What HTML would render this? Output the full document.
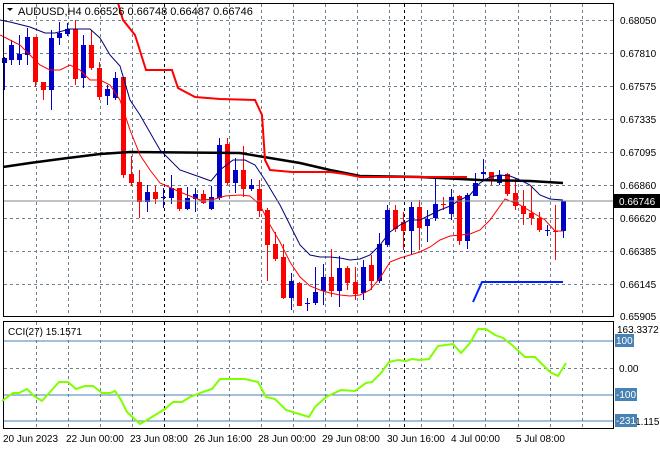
<!DOCTYPE html>
<html><head><meta charset="utf-8"><style>
html,body{margin:0;padding:0;background:#fff;}
svg{display:block;font-family:"Liberation Sans",sans-serif;}
</style></head><body>
<svg id="s" width="660" height="450" viewBox="0 0 660 450" xmlns="http://www.w3.org/2000/svg">
<rect width="660" height="450" fill="#fff"/>
<g id="grid" stroke="#6f7f8f" stroke-width="1" stroke-dasharray="3,3" fill="none"></g>
<g id="cand"></g>
<polyline fill="none" stroke="#000" stroke-width="2.5" points="3,167 30,163 60,159 100,154 130,152 240,153 270,158 300,163 330,170 360,176 420,177 480,180 530,181 563,183"/>
<polyline fill="none" stroke="#ff0000" stroke-width="2" points="118,3 123,20 135,35 146,70 172,70 178,88 195,97 220,99 255,100 262,115 265,160 270,170 292,172 330,172 345,174 360,177 467,177"/>
<polyline fill="none" stroke="#00007a" stroke-width="1" points="0,20 10,22 30,27 45,33 55,33 70,29 90,29 100,38 110,55 120,66 130,100 140,115 160,150 180,170 200,177 211,181 220,170 233,160 245,160 255,165 265,180 280,205 290,225 300,245 310,255 320,257 330,257 340,258 350,260 360,259 370,255 380,245 390,232 400,225 410,220 420,220 430,215 440,210 450,206 460,200 470,195 480,183 490,177 500,175 510,176 520,180 530,185 540,195 550,199 563,200"/>
<polyline fill="none" stroke="#ff0000" stroke-width="1" points="0,35 10,40 20,45 30,55 40,65 50,70 60,70 70,65 80,70 90,80 100,80 110,85 120,100 130,130 140,155 150,170 160,183 180,192 200,200 215,199 225,196 240,195 250,196 260,205 270,225 280,242 290,262 300,277 310,286 320,290 330,293 340,295 350,296 360,295 370,290 380,278 390,262 400,258 410,255 420,252 430,247 440,240 450,236 460,235 470,234 480,230 490,220 505,199 520,205 535,214 545,220 555,231 563,231"/>
<polyline fill="none" stroke="#0020ff" stroke-width="2" points="473,302 482,282 563,282"/>
<line x1="3" y1="201" x2="613" y2="201" stroke="#808890" stroke-width="1"/>
<!-- frames -->
<rect x="3.5" y="3.5" width="610" height="313" fill="none" stroke="#000"/>
<rect x="3.5" y="321.5" width="610" height="107" fill="none" stroke="#000"/>
<!-- CCI levels -->
<line x1="4" y1="341" x2="613" y2="341" stroke="#4682b4"/>
<line x1="4" y1="395" x2="613" y2="395" stroke="#4682b4"/>
<line x1="4" y1="421" x2="613" y2="421" stroke="#4682b4"/>
<polyline fill="none" stroke="#7fff00" stroke-width="2" points="2,401 13,393 19,393 27,389 34,396 42,401 59,382 68,382 76,389 85,386 93,386 102,393 110,393 115,391 121,400 127,412 140,424 152,417 165,409 173,402 182,402 190,397 203,392 212,389 220,379 245,379 258,382 266,397 275,399 286,410 296,413 309,417 315,407 326,397 341,390 355,391 366,383 372,382 381,373 389,362 398,360 406,361 412,359 419,360 429,359 438,346 453,344 461,353 470,343 478,329 486,329 495,335 503,338 512,345 525,357 535,357 546,368 550,372 558,376 566,363"/>
<!-- header -->
<polygon points="7,8 13,8 10,11" fill="#000"/>
<text x="18" y="15" font-size="11" fill="#000">AUDUSD,H4  0.66526 0.66748 0.66487 0.66746</text>
<text x="8" y="335" font-size="10" fill="#000">CCI(27) 15.1571</text>
<!-- right axis -->
<g font-size="10" fill="#000">
<text x="620" y="24">0.68050</text>
<text x="620" y="57">0.67810</text>
<text x="620" y="90">0.67575</text>
<text x="620" y="123">0.67335</text>
<text x="620" y="156">0.67095</text>
<text x="620" y="189">0.66860</text>
<text x="620" y="222">0.66620</text>
<text x="620" y="255">0.66385</text>
<text x="620" y="288">0.66145</text>
<text x="620" y="320">0.65905</text>
<text x="617" y="333">163.3372</text>
<text x="619" y="372">0.00</text>
<text x="624" y="425">231.115</text>
</g>
<rect x="614" y="194" width="46" height="14" fill="#000"/>
<text x="619" y="205" font-size="10" fill="#fff">0.66746</text>
<rect x="615" y="334" width="19" height="13" fill="#4682b4"/>
<text x="616" y="344" font-size="10" fill="#fff">100</text>
<rect x="615" y="388" width="22" height="13" fill="#4682b4"/>
<text x="616" y="398" font-size="10" fill="#fff">-100</text>
<rect x="615" y="414" width="22" height="13" fill="#4682b4"/>
<text x="616" y="424" font-size="10" fill="#fff">-231</text>
<!-- time axis -->
<g font-size="10" fill="#000">
<text x="3" y="442">20 Jun 2023</text>
<text x="66" y="442">22 Jun 00:00</text>
<text x="130" y="442">23 Jun 08:00</text>
<text x="194" y="442">26 Jun 16:00</text>
<text x="258" y="442">28 Jun 00:00</text>
<text x="322" y="442">29 Jun 08:00</text>
<text x="387" y="442">30 Jun 16:00</text>
<text x="451" y="442">4 Jul 00:00</text>
<text x="516" y="442">5 Jul 08:00</text>
</g>
</svg>
<script>
var NS="http://www.w3.org/2000/svg";
function el(p,t,a){var e=document.createElementNS(NS,t);for(var k in a)e.setAttribute(k,a[k]);p.appendChild(e);return e;}
var g=document.getElementById('grid');
for(var i=0;i<18;i++){var x=Math.round(36+32.1*i)+.5;
 el(g,'line',{x1:x,y1:4,x2:x,y2:316});el(g,'line',{x1:x,y1:322,x2:x,y2:428});}
[20,53,86,119,152,185,218,251,284].forEach(function(y){el(g,'line',{x1:4,y1:y+.5,x2:613,y2:y+.5});});
el(g,'line',{x1:4,y1:368.5,x2:613,y2:368.5});
[164.5,404.5].forEach(function(x){el(g,'line',{x1:x,y1:4,x2:x,y2:316,stroke:'#000'});el(g,'line',{x1:x,y1:322,x2:x,y2:428,stroke:'#000'});});
// x, top, bottom, wickTop, wickBottom, color(b/r)
var C=[[4,58,63,57,90,'b'],[11,45,60,40,65,'b'],[19,54,60,35,65,'b'],[27,37,55,28,65,'b'],[35,37,82,37,87,'r'],[43,82,90,82,100,'r'],[51,38,90,30,110,'b'],[59,33,38,22,45,'b'],[67,29,34,23,36,'b'],[75,29,79,20,85,'r'],[83,45,78,35,88,'b'],[91,45,68,30,70,'r'],[99,68,97,62,100,'r'],[107,89,96,85,105,'b'],[115,78,98,72,100,'b'],[123,77,175,77,178,'r'],[131,174,183,156,186,'r'],[139,182,202,170,218,'r'],[147,192,202,185,212,'b'],[155,192,199,186,204,'r'],[163,197,198,188,208,'b'],[171,188,198,175,204,'b'],[179,188,209,188,211,'r'],[187,198,209,187,210,'b'],[195,194,199,188,212,'b'],[203,194,203,190,204,'r'],[211,197,209,186,210,'b'],[219,145,198,138,200,'b'],[227,144,183,138,185,'r'],[235,170,183,158,193,'b'],[243,170,189,146,197,'r'],[251,185,189,179,191,'b'],[259,189,211,180,217,'r'],[267,210,245,208,281,'r'],[275,244,259,232,261,'r'],[283,257,298,244,299,'r'],[291,281,298,273,310,'b'],[299,283,306,282,306,'r'],[307,303,304,298,311,'b'],[315,292,303,267,305,'b'],[323,277,291,264,305,'b'],[331,277,291,249,297,'r'],[339,268,291,256,307,'b'],[347,268,283,266,290,'r'],[355,282,294,267,300,'r'],[363,267,293,260,300,'b'],[371,265,281,255,290,'r'],[379,244,281,233,283,'b'],[387,210,245,205,247,'b'],[395,210,229,205,232,'r'],[403,222,231,212,250,'r'],[411,207,231,202,255,'b'],[419,207,228,200,250,'r'],[427,219,226,210,242,'b'],[435,204,218,178,221,'b'],[443,204,205,197,210,'r'],[451,197,214,189,220,'b'],[459,196,241,195,245,'r'],[467,195,241,193,249,'b'],[475,183,196,173,196,'b'],[483,172,174,159,180,'b'],[491,172,180,172,185,'r'],[499,175,183,170,185,'b'],[507,174,194,173,196,'r'],[515,193,206,178,210,'r'],[523,206,214,190,225,'r'],[531,213,218,187,225,'r'],[539,218,230,212,232,'r'],[547,230,231,225,236,'b'],[555,231,232,205,260,'r'],[563,201,231,201,238,'b']];
var cg=document.getElementById('cand');
C.forEach(function(c){var col=c[5]=='b'?'#0000c8':'#ff0000';
 el(cg,'line',{x1:c[0]+.5,y1:c[3],x2:c[0]+.5,y2:c[4],stroke:col});
 el(cg,'rect',{x:c[0]-2,y:c[1],width:5,height:Math.max(1,c[2]-c[1]),fill:col});});
</script>
</body></html>
